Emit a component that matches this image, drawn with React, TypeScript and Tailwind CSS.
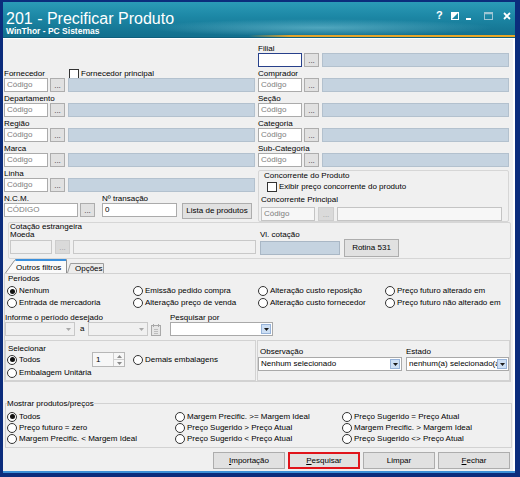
import React from "react";

type Kids = { children?: React.ReactNode; className?: string };

function Label({ children, className = "" }: Kids) {
  return <div className={`h-[11px] leading-[13px] whitespace-nowrap ${className}`}>{children}</div>;
}

function Dots({ disabled = false, className = "" }: { disabled?: boolean; className?: string }) {
  return (
    <div
      className={`w-[15px] h-[14px] shrink-0 border flex items-end justify-center pb-[1px] leading-[8px] ${
        disabled ? "bg-[#dadada] border-[#cdcdcd] text-[#a0a0a0]" : "bg-[#e1e1e1] border-[#adadad] text-[#333]"
      } ${className}`}
    >
      ...
    </div>
  );
}

function LookupRow({ focused = false }: { focused?: boolean }) {
  return (
    <div className="flex h-[14px]">
      <div
        className={`w-[44px] h-[14px] shrink-0 bg-white border pl-[2px] leading-[12px] text-[#7d7d7d] ${
          focused ? "border-[#27408b]" : "border-[#ababab]"
        }`}
      >
        {focused ? "" : "Código"}
      </div>
      <Dots className="ml-[2px]" />
      <div className="ml-[3px] flex-1 h-[14px] bg-[#c5d3e0] border border-[#b3c1ce]" />
    </div>
  );
}

function Lookup({ label, focused = false }: { label: string; focused?: boolean }) {
  return (
    <div className="h-[25px]">
      <Label>{label}</Label>
      <LookupRow focused={focused} />
    </div>
  );
}

function Checkbox({ className = "" }: { className?: string }) {
  return <span className={`block w-[10px] h-[10px] shrink-0 border border-[#333] bg-white ${className}`} />;
}

function Radio({ on = false }: { on?: boolean }) {
  return (
    <span className="flex w-[10px] h-[10px] shrink-0 rounded-full border border-[#333] bg-white items-center justify-center">
      {on && <span className="block w-[5px] h-[5px] rounded-full bg-[#111]" />}
    </span>
  );
}

function RadioItem({ label, on = false, className = "" }: { label: string; on?: boolean; className?: string }) {
  return (
    <div className={`flex items-center whitespace-nowrap ${className}`}>
      <Radio on={on} />
      <span className="ml-[2px] leading-[10px]">{label}</span>
    </div>
  );
}

function DropArrow() {
  return (
    <span className="flex w-[10px] h-[10px] mr-[1px] shrink-0 items-center justify-center bg-[#cddff4] border border-[#97b3d9]">
      <svg width="5" height="3" viewBox="0 0 5 3">
        <path d="M0 0H5L2.5 3Z" fill="#1a1a1a" />
      </svg>
    </span>
  );
}

function Combo({ text = "", className = "" }: { text?: string; className?: string }) {
  return (
    <div className={`flex items-center h-[14px] bg-white border border-[#a9a9a9] pl-[2px] ${className}`}>
      <span className="flex-1 overflow-hidden whitespace-nowrap leading-[12px]">{text}</span>
      <DropArrow />
    </div>
  );
}

function DisabledCombo({ className = "" }: { className?: string }) {
  return (
    <div className={`flex items-center justify-end h-[14px] bg-[#f0f0f0] border border-[#c8c8c8] pr-[3px] ${className}`}>
      <svg width="5" height="3" viewBox="0 0 5 3">
        <path d="M0 0H5L2.5 3Z" fill="#a8a8a8" />
      </svg>
    </div>
  );
}

function Button({ children, className = "" }: Kids) {
  return (
    <div
      className={`flex items-center justify-center bg-[#e1e1e1] border border-[#adadad] whitespace-nowrap leading-[10px] ${className}`}
    >
      {children}
    </div>
  );
}

function TitleIcons() {
  return (
    <div className="flex items-start pt-[8px]">
      <span className="w-[6px] text-[11px] leading-[11px] font-bold text-white">?</span>
      <svg className="ml-[9px] mt-[2px]" width="8" height="8" viewBox="0 0 8 8">
        <rect x="0.5" y="0.5" width="7" height="7" fill="none" stroke="#fff" />
        <path d="M0.5 0.5H7.5L0.5 7.5Z" fill="#fff" />
      </svg>
      <span className="block ml-[7px] mt-[8px] w-[5px] h-[2px] bg-white" />
      <svg className="ml-[13px] mt-[2px]" width="9" height="8" viewBox="0 0 9 8">
        <rect x="0.5" y="0.5" width="8" height="7" fill="none" stroke="#9fc6d4" />
        <path d="M0.5 1.5H8.5" stroke="#9fc6d4" strokeWidth="1.5" />
      </svg>
      <svg className="ml-[10px] mt-[2px]" width="8" height="8" viewBox="0 0 8 8">
        <path d="M1 1L7 7M7 1L1 7" stroke="#fff" strokeWidth="1.8" />
      </svg>
    </div>
  );
}

function Tabs() {
  return (
    <div className="flex items-end h-[14px] pl-[1px]">
      <div className="relative w-[62px] h-[14px]">
        <svg className="absolute inset-0" width="62" height="14" viewBox="0 0 62 14">
          <path d="M0.5 14L9.5 1.5Q10.2 0.5 11.5 0.5H61.5V14" fill="#fafafa" stroke="#8e8e8e" />
          <path d="M10.5 1H61" stroke="#3a8fdc" strokeWidth="1.8" />
        </svg>
        <div className="relative pl-[11px] pt-[4px] leading-[10px] whitespace-nowrap">Outros filtros</div>
      </div>
      <div className="relative w-[37px] h-[10px]">
        <svg className="absolute inset-0" width="37" height="10" viewBox="0 0 37 10">
          <path d="M0.5 10L3.5 0.5H36.5V10" fill="#ececec" stroke="#9c9c9c" />
        </svg>
        <div className="relative pl-[8px] leading-[11px] whitespace-nowrap">Opções</div>
      </div>
    </div>
  );
}

function CalendarIcon() {
  return (
    <svg width="12" height="13" viewBox="0 0 12 13">
      <rect x="1.5" y="2.5" width="9" height="10" fill="#e6e6e6" stroke="#a9a9a9" />
      <path d="M3.5 1V4M8.5 1V4" stroke="#a9a9a9" />
      <path d="M4 6.5H8M4 8.5H8M4 10.5H8" stroke="#bdbdbd" />
    </svg>
  );
}

function Spin() {
  return (
    <div className="flex w-[33px] h-[15px] bg-[#f7f7f7] border border-[#b7b7b7]">
      <span className="flex-1 pl-[3px] leading-[13px]">1</span>
      <div className="flex flex-col w-[11px] border-l border-[#d0d0d0]">
        <span className="flex flex-1 items-center justify-center border-b border-[#d0d0d0]">
          <svg width="5" height="3" viewBox="0 0 5 3">
            <path d="M0 3H5L2.5 0Z" fill="#8a8a8a" />
          </svg>
        </span>
        <span className="flex flex-1 items-center justify-center">
          <svg width="5" height="3" viewBox="0 0 5 3">
            <path d="M0 0H5L2.5 3Z" fill="#8a8a8a" />
          </svg>
        </span>
      </div>
    </div>
  );
}

export default function App() {
  return (
    <div className="w-[520px] h-[477px] bg-[#0b2c7c] pt-[2px] pl-[3px] pr-[5px] pb-[4px] flex flex-col overflow-hidden [font-family:'Liberation_Sans',Arial,sans-serif] text-[8px] text-black">
      {/* title bar */}
      <div className="h-[33px] shrink-0 flex justify-between pl-[3px] pr-[4px] bg-[radial-gradient(ellipse_45%_35%_at_62%_78%,rgba(150,220,236,0.45),transparent_75%),linear-gradient(180deg,#2b9ab7_0%,#1c87a5_45%,#13718f_100%)]">
        <div className="pt-[9px] text-white">
          <div className="text-[16px] leading-[16px] h-[16px] whitespace-nowrap">201 - Precificar Produto</div>
          <div className="text-[8.5px] font-bold leading-[9px] whitespace-nowrap">WinThor - PC Sistemas</div>
        </div>
        <TitleIcons />
      </div>
      <div className="h-[2px] shrink-0 bg-[linear-gradient(90deg,#13718f_0%,#13718f_48%,#e3a32a_56%,#e9a726_100%)]" />
      <div className="h-[1px] shrink-0 bg-[#0f5f7c]" />

      {/* form body */}
      <div className="flex-1 bg-[#f0f0f0] border-t border-white border-r-2 pl-[1px] pr-[1px] pt-[3px] pb-[2px] flex flex-col overflow-hidden">
        {/* lookups */}
        <div className="h-[180px] shrink-0 grid grid-cols-[251px_251px] gap-x-[3px]">
          <div className="flex flex-col">
            <div className="h-[25px]" />
            <div className="h-[25px]">
              <div className="h-[11px] flex items-start">
                <span className="w-[65px] leading-[13px]">Fornecedor</span>
                <Checkbox className="mt-[2px]" />
                <span className="ml-[2px] leading-[13px] whitespace-nowrap">Fornecedor principal</span>
              </div>
              <LookupRow />
            </div>
            <Lookup label="Departamento" />
            <Lookup label="Região" />
            <Lookup label="Marca" />
            <Lookup label="Linha" />
            <div className="flex">
              <div>
                <Label>N.C.M.</Label>
                <div className="flex h-[14px]">
                  <div className="w-[74px] h-[14px] bg-white border border-[#ababab] pl-[2px] leading-[12px] text-[#7d7d7d]">
                    CÓDIGO
                  </div>
                  <Dots className="ml-[2px]" />
                </div>
              </div>
              <div className="ml-[7px]">
                <Label>Nº transação</Label>
                <div className="w-[75px] h-[14px] bg-white border border-[#ababab] pl-[2px] leading-[12px]">0</div>
              </div>
              <Button className="ml-[5px] mt-[11px] w-[70px] h-[16px]">Lista de produtos</Button>
            </div>
          </div>

          <div className="flex flex-col">
            <Lookup label="Filial" focused />
            <Lookup label="Comprador" />
            <Lookup label="Seção" />
            <Lookup label="Categoria" />
            <Lookup label="Sub-Categoria" />
            <div className="mt-[3px] h-[52px] border border-[#d6d6d6] rounded-[2px] px-[2px]">
              <div className="h-[10px] leading-[10px] ml-[3px] whitespace-nowrap">Concorrente do Produto</div>
              <div className="h-[12px] flex items-center ml-[6px]">
                <Checkbox />
                <span className="ml-[2px] leading-[10px] whitespace-nowrap">Exibir preço concorrente do produto</span>
              </div>
              <div className="h-[13px] leading-[13px] whitespace-nowrap">Concorrente Principal</div>
              <div className="mt-[1px] flex h-[14px] pr-[4px]">
                <div className="w-[54px] h-[14px] bg-[#f7f7f7] border border-[#c4c4c4] pl-[2px] leading-[12px] text-[#7d7d7d]">
                  Código
                </div>
                <Dots disabled className="ml-[3px] w-[16px]" />
                <div className="ml-[3px] flex-1 h-[14px] bg-[#f7f7f7] border border-[#c4c4c4]" />
              </div>
            </div>
          </div>
        </div>

        {/* foreign quote */}
        <div className="h-[37px] shrink-0 ml-[4px] mr-[1px] border border-[#d6d6d6] rounded-[2px] pl-[1px] flex">
          <div className="w-[246px]">
            <div className="h-[8px] leading-[7px] whitespace-nowrap">Cotação estrangeira</div>
            <div className="h-[8px] leading-[8px]">Moeda</div>
            <div className="mt-[1px] flex h-[14px]">
              <div className="w-[42px] h-[14px] bg-[#f0f0f0] border border-[#c8c8c8]" />
              <Dots disabled className="ml-[3px]" />
              <div className="ml-[3px] flex-1 h-[14px] bg-[#f0f0f0] border border-[#c8c8c8]" />
            </div>
          </div>
          <div className="ml-[4px]">
            <div className="h-[8px]" />
            <div className="h-[8px] leading-[8px] whitespace-nowrap">Vl. cotação</div>
            <div className="h-[18px] flex items-center">
              <div className="w-[80px] h-[14px] bg-[#c5d3e0] border border-[#a9b7c5]" />
              <Button className="ml-[4px] w-[55px] h-[18px]">Rotina 531</Button>
            </div>
          </div>
        </div>

        <Tabs />

        {/* filters tab */}
        <div className="h-[109px] shrink-0 mr-[1px] border border-[#d2d2d2] flex flex-col">
          <div className="h-[11px] leading-[10px] pl-[3px]">Periodos</div>
          <div className="pl-[2px] grid grid-cols-[126px_125px_127px_1fr] grid-rows-[12px_12px]">
            <RadioItem label="Nenhum" on />
            <RadioItem label="Emissão pedido compra" />
            <RadioItem label="Alteração custo reposição" />
            <RadioItem label="Preço futuro alterado em" />
            <RadioItem label="Entrada de mercadoria" />
            <RadioItem label="Alteração preço de venda" />
            <RadioItem label="Alteração custo fornecedor" />
            <RadioItem label="Preço futuro não alterado em" />
          </div>
          <div className="h-[4px]" />
          <div className="flex h-[23px]">
            <div className="w-[165px]">
              <div className="h-[9px] leading-[9px] whitespace-nowrap">Informe o período desejado</div>
              <div className="flex h-[14px] items-center">
                <DisabledCombo className="w-[70px]" />
                <span className="w-[13px] pl-[5px] leading-[12px]">a</span>
                <DisabledCombo className="w-[60px]" />
                <span className="ml-[2px] flex">
                  <CalendarIcon />
                </span>
              </div>
            </div>
            <div>
              <div className="h-[9px] leading-[9px] whitespace-nowrap">Pesquisar por</div>
              <Combo className="w-[103px]" />
            </div>
          </div>
          <div className="h-[4px]" />
          <div className="flex h-[41px]">
            <div className="w-[251px] border border-[#d2d2d2] pt-[3px]">
              <div className="h-[9px] leading-[9px] pl-[2px]">Selecionar</div>
              <div className="h-[13px] flex items-center pl-[1px]">
                <RadioItem label="Todos" on className="w-[85px]" />
                <Spin />
                <RadioItem label="Demais embalagens" className="ml-[8px]" />
              </div>
              <div className="h-[13px] flex items-center pl-[1px]">
                <RadioItem label="Embalagem Unitária" />
              </div>
            </div>
            <div className="ml-[1px] flex-1 border border-[#d2d2d2] pt-[6px] flex">
              <div className="w-[144px]">
                <div className="h-[9px] leading-[9px] pl-[2px]">Observação</div>
                <Combo text="Nenhum selecionado" className="mt-[1px]" />
              </div>
              <div className="ml-[4px] w-[103px]">
                <div className="h-[9px] leading-[9px]">Estado</div>
                <Combo text="nenhum(a) selecionado(a)" className="mt-[1px]" />
              </div>
            </div>
          </div>
        </div>

        {/* products / prices */}
        <div className="h-[45px] shrink-0 mt-[21px] ml-[1px] border border-[#d2d2d2] pb-[3px]">
          <div className="-mt-[5px] ml-[1px] w-fit h-[9px] leading-[9px] bg-[#f0f0f0] whitespace-nowrap">
            Mostrar produtos/preços
          </div>
          <div className="mt-[3px] pl-[1px] grid grid-cols-[168px_167px_1fr] grid-rows-[11px_11px_11px] grid-flow-col">
            <RadioItem label="Todos" on />
            <RadioItem label="Preço futuro = zero" />
            <RadioItem label="Margem Precific. < Margem Ideal" />
            <RadioItem label="Margem Precific. >= Margem Ideal" />
            <RadioItem label="Preço Sugerido > Preço Atual" />
            <RadioItem label="Preço Sugerido < Preço Atual" />
            <RadioItem label="Preço Sugerido = Preço Atual" />
            <RadioItem label="Margem Precific. > Margem Ideal" />
            <RadioItem label="Preço Sugerido <> Preço Atual" />
          </div>
        </div>

        {/* actions */}
        <div className="mt-[4px] h-[17px] shrink-0 flex justify-end gap-[3px] pr-[2px]">
          <Button className="w-[72px] h-[17px]">
            <span className="underline">I</span>mportação
          </Button>
          <Button className="w-[72px] h-[17px] border-2 border-[#e0141b]">
            <span className="underline">P</span>esquisar
          </Button>
          <Button className="w-[72px] h-[17px]">Limpar</Button>
          <Button className="w-[72px] h-[17px]">
            <span className="underline">F</span>echar
          </Button>
        </div>
      </div>
      <div className="h-[2px] shrink-0 bg-[#3d90d6]" />
    </div>
  );
}
